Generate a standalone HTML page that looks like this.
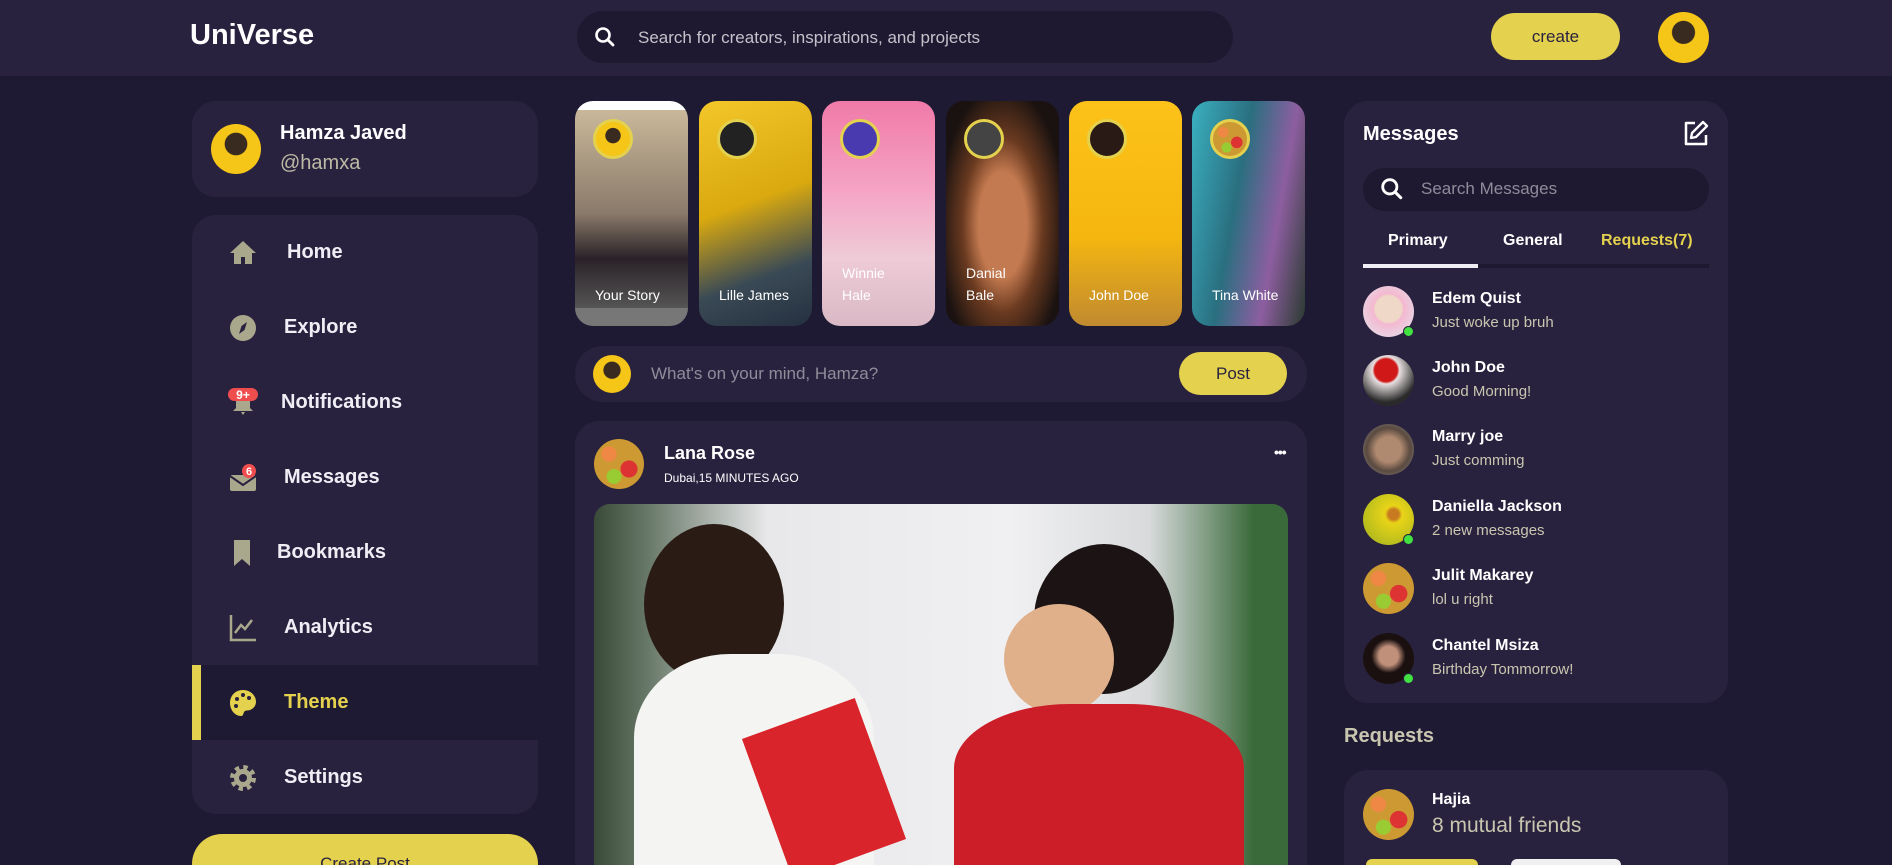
<!DOCTYPE html>
<html><head><meta charset="utf-8"><style>
*{box-sizing:border-box;margin:0;padding:0}
html,body{width:1892px;height:865px;overflow:hidden}
body{background:#1f1a33;font-family:"Liberation Sans",sans-serif;color:#fff}
#w{position:relative;width:1892px;height:865px;overflow:hidden}
.abs{position:absolute;white-space:nowrap}
.hdr{left:0;top:0;width:1892px;height:76px;background:#29223f}
.card{background:#29223f;border-radius:24px}
.av{border-radius:50%;background:radial-gradient(circle at 50% 40%,#3a2b20 0 28%,#f5c518 30%)}
.fruit{border-radius:50%;background:radial-gradient(circle at 30% 30%,#e84 0 15%,transparent 16%),radial-gradient(circle at 70% 60%,#d33 0 18%,transparent 19%),radial-gradient(circle at 40% 75%,#9c3 0 15%,transparent 16%),#c93}
.nav{left:192px;height:75px;width:346px;display:flex;align-items:center;font-weight:bold;font-size:20px;color:#f0eef5}
.ic{position:absolute;left:36px;width:30px;height:30px}
.story{top:101px;width:113px;height:225px;border-radius:18px;overflow:hidden}
.story .r{position:absolute;left:18px;top:18px;width:40px;height:40px;border-radius:50%;border:3px solid #e4d14d}
.story .n{position:absolute;left:20px;bottom:20px;font-size:14px;line-height:22px;color:#fff}
.msg{width:384px;height:760px}
.msg .a{position:absolute;left:0;width:51px;height:51px;border-radius:50%}
.msg .dot{position:absolute;width:11px;height:11px;border-radius:50%;background:#41e241;border:1px solid #29223f}
.mn{position:absolute;left:69px;font-weight:bold;font-size:16px;white-space:nowrap}
.ms{position:absolute;left:69px;font-size:15px;color:#c9c6b0;white-space:nowrap}
</style></head><body><div id="w">
<div class="abs hdr"></div>
<div class="abs" style="left:190px;top:19px;font-size:29px;font-weight:bold">UniVerse</div>
<div class="abs" style="left:577px;top:11px;width:656px;height:52px;border-radius:26px;background:#1e1930"></div>
<svg class="abs" style="left:594px;top:26px" width="22" height="22" viewBox="0 0 22 22"><circle cx="9" cy="9" r="6.5" fill="none" stroke="#fff" stroke-width="2.6"/><path d="M14 14l5 5" stroke="#fff" stroke-width="2.8" stroke-linecap="round"/></svg>
<div class="abs" style="left:638px;top:28px;font-size:17px;color:#c5c2cc">Search for creators, inspirations, and projects</div>
<div class="abs" style="left:1491px;top:13px;width:129px;height:47px;border-radius:24px;background:#e4d14d;color:#29223f;font-size:17px;text-align:center;line-height:47px">create</div>
<div class="abs av" style="left:1658px;top:12px;width:51px;height:51px"></div>

<div class="abs card" style="left:192px;top:101px;width:346px;height:96px"></div>
<div class="abs av" style="left:211px;top:124px;width:50px;height:50px"></div>
<div class="abs" style="left:280px;top:122px;font-size:20px;font-weight:bold">Hamza Javed</div>
<div class="abs" style="left:280px;top:152px;font-size:20px;color:#bdbaa6">@hamxa</div>
<div class="abs card" style="left:192px;top:215px;width:346px;height:599px"></div>
<div class="abs nav" style="top:215px"><svg class="ic" viewBox="0 0 30 30"><path d="M15 3L2 15h4v11h7v-7h4v7h7V15h4z" fill="#aaa88c"/></svg><span style="margin-left:95px">Home</span></div>
<div class="abs nav" style="top:290px"><svg class="ic" viewBox="0 0 30 30"><circle cx="15" cy="15" r="13" fill="#aaa88c"/><path d="M19 9l-2.5 8-5.5 4 2.5-8z" fill="#29223f"/></svg><span style="margin-left:92px">Explore</span></div>
<div class="abs nav" style="top:365px"><svg class="ic" viewBox="0 0 30 30"><path d="M8 12h14v8l3 3H5l3-3z M13 24h4l-2 3z" fill="#aaa88c"/><rect x="0" y="0" width="30" height="13" rx="6.5" fill="#f04e4e"/><text x="15" y="11" font-size="12" font-weight="bold" fill="#fff" text-anchor="middle" font-family="Liberation Sans">9+</text></svg><span style="margin-left:89px">Notifications</span></div>
<div class="abs nav" style="top:440px"><svg class="ic" viewBox="0 0 30 30"><rect x="2" y="12" width="26" height="16" rx="2" fill="#aaa88c"/><path d="M2 13l13 9 13-9" stroke="#29223f" stroke-width="2" fill="none"/><circle cx="21" cy="8" r="7" fill="#f04e4e"/><text x="21" y="12" font-size="11" font-weight="bold" fill="#fff" text-anchor="middle" font-family="Liberation Sans">6</text></svg><span style="margin-left:92px">Messages</span></div>
<div class="abs nav" style="top:515px"><svg class="ic" viewBox="0 0 30 30"><path d="M6 2h16v26l-8-7-8 7z" fill="#aaa88c"/></svg><span style="margin-left:85px">Bookmarks</span></div>
<div class="abs nav" style="top:590px"><svg class="ic" viewBox="0 0 30 30"><path d="M3 2v25h25M7 20l6-8 4 4 7-9" stroke="#aaa88c" stroke-width="2.5" fill="none"/></svg><span style="margin-left:92px">Analytics</span></div>
<div class="abs" style="left:192px;top:665px;width:346px;height:75px;background:#1f1a33"></div>
<div class="abs" style="left:192px;top:665px;width:9px;height:75px;background:#e4d14d"></div>
<div class="abs nav" style="top:665px;color:#e4d14d"><svg class="ic" viewBox="0 0 30 30"><path d="M15 2C7 2 2 8 2 15s5 13 11 13c3 0 2-4 4-5s4 0 7-2 4-5 4-7C28 7 22 2 15 2z" fill="#e4d14d"/><circle cx="9" cy="11" r="2" fill="#29223f"/><circle cx="15" cy="7" r="2" fill="#29223f"/><circle cx="21" cy="10" r="2" fill="#29223f"/><circle cx="8" cy="18" r="2" fill="#29223f"/></svg><span style="margin-left:92px">Theme</span></div>
<div class="abs nav" style="top:740px"><svg class="ic" viewBox="0 0 30 30"><circle cx="15" cy="15" r="10" fill="none" stroke="#aaa88c" stroke-width="6" stroke-dasharray="4 3.85"/><circle cx="15" cy="15" r="9" fill="#aaa88c"/><circle cx="15" cy="15" r="4" fill="#29223f"/></svg><span style="margin-left:92px">Settings</span></div>
<div class="abs" style="left:192px;top:834px;width:346px;height:31px;border-radius:30px 30px 0 0;background:#e4d14d;color:#29223f;text-align:center;font-size:17px;padding-top:20px;overflow:hidden;line-height:20px">Create Post</div>

<div class="abs story" style="left:575px;background:linear-gradient(#fff 0 4%,#c9b89a 4%,#8a7a6a 50%,#2a2228 70%,#555 92%,#777 92%)"><div class="r av" style="width:40px;height:40px"></div><div class="n">Your Story</div></div>
<div class="abs story" style="left:699px;background:linear-gradient(160deg,#f3c62a,#d9a90f 45%,#3a4a55 75%,#253040)"><div class="r" style="background:#222"></div><div class="n">Lille James</div></div>
<div class="abs story" style="left:822px;background:linear-gradient(#f07aa8,#f5a4c5 40%,#eecbd6 70%,#d9b9c5)"><div class="r" style="background:#4a3ab0"></div><div class="n">Winnie<br>Hale</div></div>
<div class="abs story" style="left:946px;background:radial-gradient(ellipse at 50% 55%,#c47a50 0 30%,#6a3a20 50%,#1a1210 80%)"><div class="r" style="background:#444"></div><div class="n">Danial<br>Bale</div></div>
<div class="abs story" style="left:1069px;background:linear-gradient(#fcc21a,#f5b70f 60%,#c08a30)"><div class="r" style="background:#2a1a16"></div><div class="n">John Doe</div></div>
<div class="abs story" style="left:1192px;background:linear-gradient(100deg,#3ab0c0,#2a6f80 40%,#8d5ea0 70%,#2a3a30)"><div class="r fruit"></div><div class="n">Tina White</div></div>

<div class="abs card" style="left:575px;top:346px;width:732px;height:56px;border-radius:28px"></div>
<div class="abs av" style="left:593px;top:355px;width:38px;height:38px"></div>
<div class="abs" style="left:651px;top:364px;font-size:17px;color:#8f8c9a">What's on your mind, Hamza?</div>
<div class="abs" style="left:1179px;top:352px;width:108px;height:43px;border-radius:22px;background:#e4d14d;color:#29223f;font-size:17px;text-align:center;line-height:43px">Post</div>

<div class="abs card" style="left:575px;top:421px;width:732px;height:444px;border-radius:24px 24px 0 0"></div>
<div class="abs fruit" style="left:594px;top:439px;width:50px;height:50px"></div>
<div class="abs" style="left:664px;top:443px;font-size:18px;font-weight:bold">Lana Rose</div>
<div class="abs" style="left:664px;top:471px;font-size:12px">Dubai,15 MINUTES AGO</div>
<div class="abs" style="left:1274px;top:444px;font-size:14px;font-weight:bold;letter-spacing:-1px">•••</div>
<div class="abs" style="left:594px;top:504px;width:694px;height:361px;border-radius:16px 16px 0 0;overflow:hidden;background:linear-gradient(90deg,#3a4a38 0,#6a7a6a 8%,#e8e8ea 25%,#f0f0f2 60%,#d8dadc 80%,#3a6a3a 95%)">
<div class="abs" style="left:50px;top:20px;width:140px;height:160px;border-radius:50%;background:#2a1c14"></div>
<div class="abs" style="left:40px;top:150px;width:240px;height:211px;border-radius:40% 40% 0 0;background:#f4f4f2"></div>
<div class="abs" style="left:170px;top:210px;width:120px;height:150px;background:#d8242a;transform:rotate(-20deg)"></div>
<div class="abs" style="left:440px;top:40px;width:140px;height:150px;border-radius:50%;background:#1c1414"></div>
<div class="abs" style="left:410px;top:100px;width:110px;height:110px;border-radius:50%;background:#e0b08a"></div>
<div class="abs" style="left:360px;top:200px;width:290px;height:161px;border-radius:40% 40% 0 0;background:#cc1e28"></div>
</div>

<div class="abs card" style="left:1344px;top:101px;width:384px;height:602px"></div>
<div class="abs" style="left:1363px;top:123px;font-size:20px;font-weight:bold">Messages</div>
<svg class="abs" style="left:1682px;top:119px" width="28" height="28" viewBox="0 0 28 28"><path d="M13 4H4v21h20v-9" stroke="#fff" stroke-width="2.5" fill="none" stroke-linejoin="round"/><path d="M21 3l4 4-11 11-5 1 1-5z" stroke="#fff" stroke-width="2.3" fill="none" stroke-linejoin="round"/></svg>
<div class="abs" style="left:1363px;top:168px;width:346px;height:43px;border-radius:22px;background:#1e1930"></div>
<svg class="abs" style="left:1380px;top:177px" width="24" height="24" viewBox="0 0 22 22"><circle cx="9" cy="9" r="6.5" fill="none" stroke="#fff" stroke-width="2.6"/><path d="M14 14l5 5" stroke="#fff" stroke-width="2.8" stroke-linecap="round"/></svg>
<div class="abs" style="left:1421px;top:179px;font-size:17px;color:#8f8c9a">Search Messages</div>
<div class="abs" style="left:1388px;top:232px;font-size:16px;font-weight:bold">Primary</div>
<div class="abs" style="left:1503px;top:232px;font-size:16px;font-weight:bold">General</div>
<div class="abs" style="left:1601px;top:232px;font-size:16px;font-weight:bold;color:#e4d14d">Requests(7)</div>
<div class="abs" style="left:1363px;top:264px;width:346px;height:4px;background:#1e1930"></div>
<div class="abs" style="left:1363px;top:264px;width:115px;height:4px;background:#f0eef5"></div>
<div class="abs msg" style="left:1363px;top:0">
 <div class="a" style="top:286px;background:radial-gradient(circle at 50% 45%,#f0d8c8 0 35%,#f4b8d0 40%,#e0e8f0)"></div><div class="dot" style="left:40px;top:326px"></div>
 <div class="mn" style="top:290px">Edem Quist</div><div class="ms" style="top:314px">Just woke up bruh</div>
 <div class="a" style="top:355px;background:radial-gradient(circle at 45% 30%,#d01818 0 25%,#e8e0e0 30%,#2a2a2a 70%)"></div>
 <div class="mn" style="top:359px">John Doe</div><div class="ms" style="top:383px">Good Morning!</div>
 <div class="a" style="top:424px;background:radial-gradient(circle at 50% 50%,#b08a70 0 35%,#5a4a40 60%,#8a8a8a)"></div>
 <div class="mn" style="top:428px">Marry joe</div><div class="ms" style="top:452px">Just comming</div>
 <div class="a" style="top:494px;background:radial-gradient(circle at 60% 40%,#c87a20 0 12%,#e8d418 20%,#9cb020)"></div><div class="dot" style="left:40px;top:534px"></div>
 <div class="mn" style="top:498px">Daniella Jackson</div><div class="ms" style="top:522px">2 new messages</div>
 <div class="a fruit" style="top:563px"></div>
 <div class="mn" style="top:567px">Julit Makarey</div><div class="ms" style="top:591px">lol u right</div>
 <div class="a" style="top:633px;background:radial-gradient(circle at 50% 45%,#c0907a 0 25%,#1a1010 45%)"></div><div class="dot" style="left:40px;top:673px"></div>
 <div class="mn" style="top:637px">Chantel Msiza</div><div class="ms" style="top:661px">Birthday Tommorrow!</div>
</div>
<div class="abs" style="left:1344px;top:725px;font-size:20px;font-weight:bold;color:#c9c6b0">Requests</div>
<div class="abs card" style="left:1344px;top:770px;width:384px;height:95px;border-radius:24px 24px 0 0"></div>
<div class="abs fruit" style="left:1363px;top:789px;width:51px;height:51px"></div>
<div class="abs" style="left:1432px;top:791px;font-size:16px;font-weight:bold">Hajia</div>
<div class="abs" style="left:1432px;top:814px;font-size:21px;color:#c9c6b0">8 mutual friends</div>
<div class="abs" style="left:1366px;top:859px;width:112px;height:6px;border-radius:15px 15px 0 0;background:#e4d14d"></div>
<div class="abs" style="left:1511px;top:859px;width:110px;height:6px;border-radius:15px 15px 0 0;background:#f0f0f0"></div>
</div></body></html>
